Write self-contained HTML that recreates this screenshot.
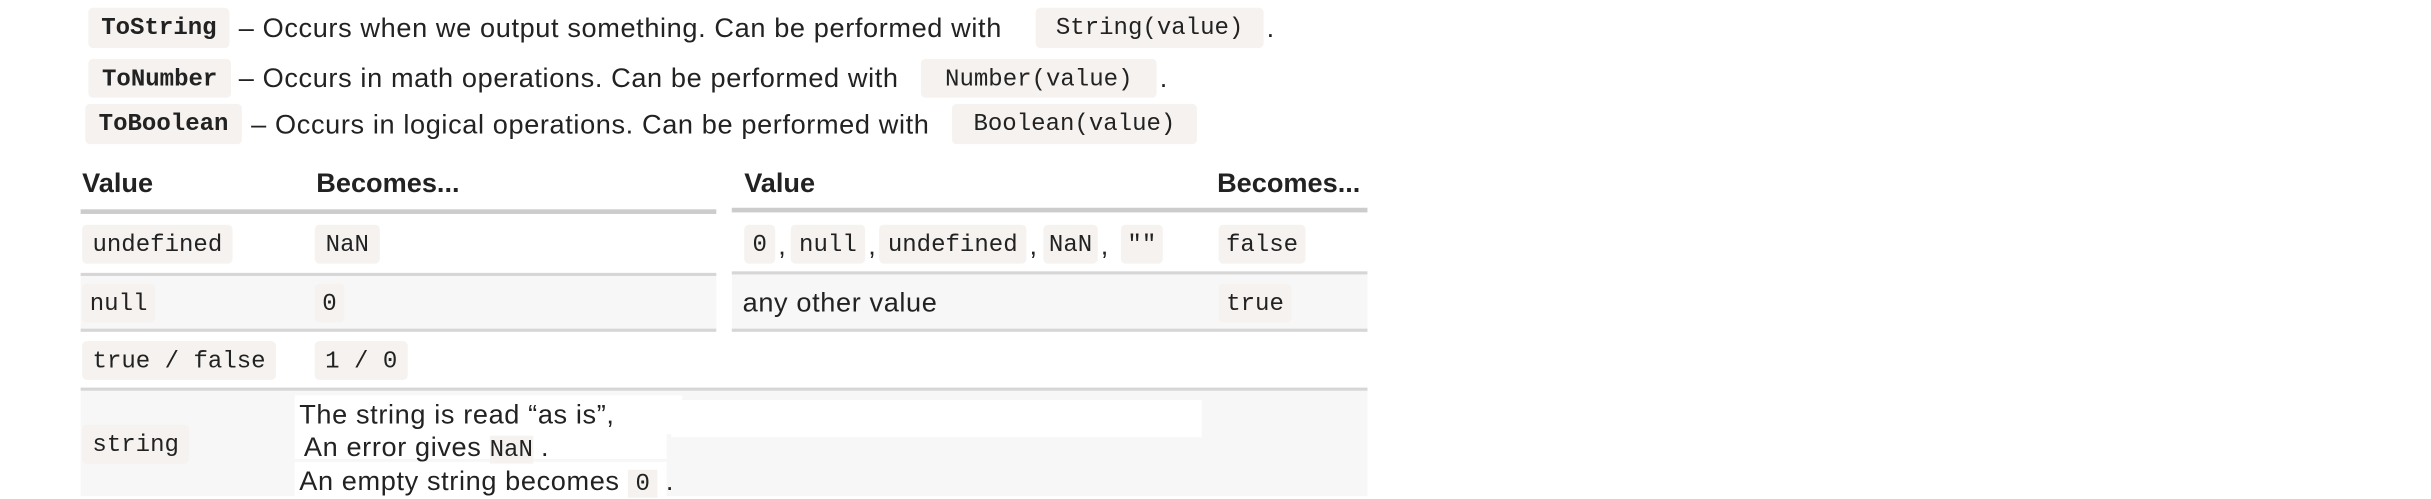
<!DOCTYPE html>
<html><head><meta charset="utf-8"><style>
html,body{margin:0;padding:0;background:#fff;width:2431px;height:496px;overflow:hidden}
#w{position:absolute;left:0;top:0;width:1568px;height:320px;transform:scale(1.5504);transform-origin:0 0;font-family:"Liberation Sans",sans-serif;font-size:17.5px;color:#222;letter-spacing:0.4px}
.a{position:absolute;white-space:nowrap;line-height:20px}
.c{position:absolute;background:#f5f2f0;border-radius:3px;font-family:"Liberation Mono",monospace;font-size:15.5px;letter-spacing:0;display:flex;align-items:center;justify-content:center;color:#222}
.b{font-weight:bold;letter-spacing:0}
.l{position:absolute;background:#d6d6d6}
.g{position:absolute;background:#f7f7f7}
.m{background:#f5f2f0;font-family:'Liberation Mono',monospace;font-size:15.5px;letter-spacing:0}
</style></head><body><div id="w">
<div class="c b" style="left:57px;top:5px;width:91px;height:26px">ToString</div>
<div class="a" style="left:154px;top:8px">– Occurs when we output something. Can be performed with</div>
<div class="c" style="left:668px;top:5px;width:147px;height:26px">String(value)</div>
<div class="a" style="left:817px;top:8px">.</div>

<div class="c b" style="left:57px;top:38px;width:92px;height:25px">ToNumber</div>
<div class="a" style="left:154px;top:40px">– Occurs in math operations. Can be performed with</div>
<div class="c" style="left:594px;top:38px;width:152px;height:25px">Number(value)</div>
<div class="a" style="left:748px;top:40px">.</div>

<div class="c b" style="left:55px;top:67px;width:101px;height:26px">ToBoolean</div>
<div class="a" style="left:162px;top:70px">– Occurs in logical operations. Can be performed with</div>
<div class="c" style="left:614px;top:67px;width:158px;height:26px">Boolean(value)</div>

<div class="a b" style="left:53px;top:108px">Value</div>
<div class="a b" style="left:204px;top:108px">Becomes...</div>
<div class="a b" style="left:480px;top:108px">Value</div>
<div class="a b" style="left:785px;top:108px">Becomes...</div>
<div class="l" style="left:52px;top:135px;width:410px;height:3px;background:#ccc"></div>
<div class="l" style="left:472px;top:134px;width:410px;height:3px;background:#ccc"></div>

<div class="g" style="left:52px;top:177px;width:410px;height:36px"></div>
<div class="g" style="left:472px;top:176px;width:410px;height:37px"></div>
<div class="g" style="left:52px;top:251px;width:830px;height:69px"></div>

<div class="c" style="left:53px;top:145px;width:97px;height:25px">undefined</div>
<div class="c" style="left:203px;top:145px;width:42px;height:25px">NaN</div>
<div class="c" style="left:480px;top:145px;width:20px;height:25px">0</div>
<div class="a" style="left:502px;top:148px">,</div>
<div class="c" style="left:510px;top:145px;width:48px;height:25px">null</div>
<div class="a" style="left:560px;top:148px">,</div>
<div class="c" style="left:567px;top:145px;width:95px;height:25px">undefined</div>
<div class="a" style="left:664px;top:148px">,</div>
<div class="c" style="left:673px;top:145px;width:35px;height:25px">NaN</div>
<div class="a" style="left:710px;top:148px">,</div>
<div class="c" style="left:723px;top:145px;width:27px;height:25px">""</div>
<div class="c" style="left:786px;top:145px;width:56px;height:25px">false</div>
<div class="l" style="left:52px;top:176px;width:410px;height:1.5px"></div>
<div class="l" style="left:472px;top:175px;width:410px;height:1.5px"></div>

<div class="c" style="left:53px;top:183px;width:47px;height:25px">null</div>
<div class="c" style="left:203px;top:183px;width:19px;height:25px">0</div>
<div class="a" style="left:479px;top:185px">any other value</div>
<div class="c" style="left:786px;top:183px;width:47px;height:25px">true</div>
<div class="l" style="left:52px;top:212px;width:410px;height:1.5px"></div>
<div class="l" style="left:472px;top:212px;width:410px;height:1.5px"></div>

<div class="c" style="left:53px;top:220px;width:125px;height:25px">true / false</div>
<div class="c" style="left:203px;top:220px;width:60px;height:25px">1 / 0</div>
<div class="l" style="left:52px;top:250px;width:830px;height:1.5px"></div>

<div style="position:absolute;left:190px;top:255px;width:250px;height:25px;background:#fff"></div>
<div style="position:absolute;left:433px;top:258px;width:342px;height:24px;background:#fff"></div>
<div style="position:absolute;left:190px;top:278px;width:240px;height:18px;background:#fff"></div>
<div style="position:absolute;left:190px;top:298px;width:240px;height:22px;background:#fff"></div>
<div class="c" style="left:53px;top:274px;width:69px;height:25px">string</div>
<div class="a" style="left:193px;top:257px">The string is read “as is”,</div>
<div class="a" style="left:196px;top:278px">An error gives <span class="m">NaN</span> .</div>
<div class="a" style="left:193px;top:300px">An empty string becomes <span class="m" style="padding:0 5px">0</span> .</div>
</div></body></html>
